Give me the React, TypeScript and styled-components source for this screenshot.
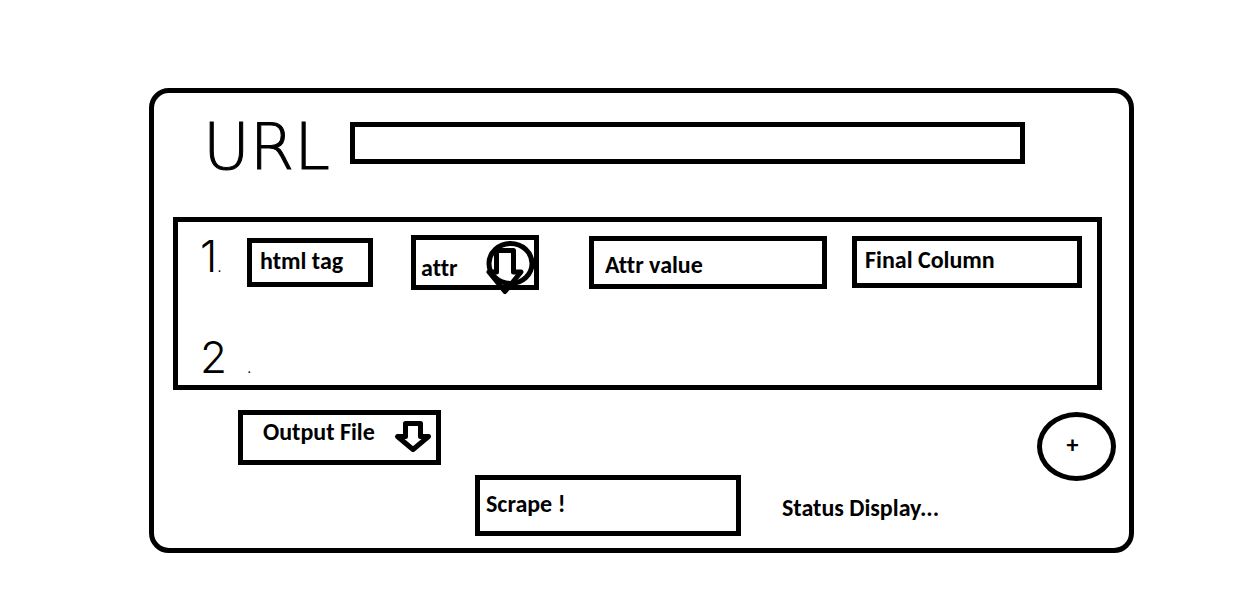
import React from "react";
import styled, { createGlobalStyle } from "styled-components";

const GlobalStyle = createGlobalStyle`
  *, *::before, *::after { box-sizing: border-box; }
  body {
    margin: 0;
    background: #fff;
    color: #000;
    font-family: Calibri, Carlito, Lato, sans-serif;
    font-size: 24px;
    font-weight: 700;
    font-variant-ligatures: none;
    line-height: 28px;
  }
  input, select, button {
    font: inherit;
    font-variant-ligatures: none;
    color: inherit;
  }
`;

const Page = styled.main`
  padding: 88px 108px 56px 149px;
`;

const Card = styled.form`
  border: 5px solid #000;
  border-radius: 20px;
  padding: 29px 27px 12px 19px;
`;

const UrlRow = styled.div`
  display: flex;
  align-items: center;
  height: 42px;
  margin: 0 77px 53px 30px;
`;

const UrlLabel = styled.label`
  flex: 0 0 147px;
  padding-top: 8px;
  font-family: "DejaVu Sans", sans-serif;
  font-size: 64px;
  font-weight: 200;
  line-height: 42px;
  -webkit-text-stroke: 1px #000;
`;

const Box = styled.input<{ $inset?: number; $top?: number; $bottom?: number }>`
  display: block;
  width: 100%;
  min-width: 0;
  height: 100%;
  border: 5px solid #000;
  border-radius: 0;
  background: #fff;
  padding: ${(p) => p.$top ?? 0}px 0 ${(p) => p.$bottom ?? 0}px ${(p) => p.$inset ?? 8}px;
  &::placeholder { color: #000; opacity: 1; }
`;

const Rules = styled.ol`
  list-style: none;
  margin: 0;
  padding: 12px 15px 0 22px;
  border: 5px solid #000;
`;

const Rule = styled.li`
  display: flex;
  align-items: center;
  min-height: 56px;
  & + & {
    min-height: 44px;
    margin-top: 51px;
  }
`;

const RuleNumber = styled.span<{ $gap: number }>`
  display: flex;
  flex: 0 0 47px;
  align-items: baseline;
  gap: ${(p) => p.$gap}px;
  height: 44px;
  font-family: Inter, sans-serif;
  font-size: 44px;
  font-weight: 300;
  line-height: 32px;
  small { font-size: 16px; }
`;

const Fields = styled.div`
  display: grid;
  flex: 1;
  grid-template-columns: 126fr 38px 128fr 50px 238fr 25px 230fr;
  align-items: center;
`;

const Field = styled.div<{ $column: number; $height: number }>`
  position: relative;
  grid-column: ${(p) => p.$column};
  height: ${(p) => p.$height}px;
`;

const Select = styled.select<{ $inset: number; $top?: number; $bottom?: number }>`
  appearance: none;
  display: block;
  width: 100%;
  height: 100%;
  border: 5px solid #000;
  border-radius: 0;
  background: #fff;
  padding: ${(p) => p.$top ?? 0}px 0 ${(p) => p.$bottom ?? 0}px ${(p) => p.$inset}px;
`;

const Arrow = styled.svg`
  position: absolute;
  top: 0;
  right: 0;
  overflow: visible;
  pointer-events: none;
  fill: none;
  stroke: #000;
  stroke-width: 5;
  stroke-linejoin: round;
`;

const Footer = styled.div`
  display: flex;
  align-items: flex-start;
  margin: 20px -14px 0 65px;
`;

const OutputField = styled.div`
  position: relative;
  flex: 0 1 203px;
  height: 55px;
`;

const ScrapeButton = styled.button`
  flex: 0 1 266px;
  height: 61px;
  margin: 65px 0 0 34px;
  border: 5px solid #000;
  background: #fff;
  padding: 0 6px 4px;
  text-align: left;
`;

const Status = styled.output`
  margin: 84px 0 0 41px;
  white-space: nowrap;
`;

const AddButton = styled.button`
  flex: 0 0 79px;
  height: 69px;
  margin: 2px 0 0 auto;
  border: 5px solid #000;
  border-radius: 50%;
  background: #fff;
  padding: 0 8px 4px 0;
`;

export default function App() {
  return (
    <>
      <GlobalStyle />
      <Page>
        <Card onSubmit={(e: React.FormEvent) => e.preventDefault()}>
          <UrlRow>
            <UrlLabel htmlFor="url">URL</UrlLabel>
            <Box id="url" type="text" />
          </UrlRow>

          <Rules>
            <Rule>
              <RuleNumber $gap={0}>
                1<small>.</small>
              </RuleNumber>
              <Fields>
                <Field $column={1} $height={49}>
                  <Box $bottom={4} aria-label="html tag" placeholder="html tag" />
                </Field>
                <Field $column={3} $height={55}>
                  <Select aria-label="attr" $inset={5} $top={12}>
                    <option>attr</option>
                  </Select>
                  <Arrow width="60" height="60" viewBox="0 0 60 60" aria-hidden="true">
                    <ellipse cx="31.5" cy="28.5" rx="21.5" ry="20" />
                    <path d="M17.5 15.5H34.5V37H42L26 56.5L10 37H17.5Z" />
                  </Arrow>
                </Field>
                <Field $column={5} $height={53}>
                  <Box $inset={11} $top={4} aria-label="Attr value" placeholder="Attr value" />
                </Field>
                <Field $column={7} $height={52}>
                  <Box $bottom={6} aria-label="Final Column" placeholder="Final Column" />
                </Field>
              </Fields>
            </Rule>
            <Rule>
              <RuleNumber $gap={20}>
                2<small>.</small>
              </RuleNumber>
            </Rule>
          </Rules>

          <Footer>
            <OutputField>
              <Select aria-label="Output File" $inset={20} $bottom={12}>
                <option>Output File</option>
              </Select>
              <Arrow width="50" height="50" viewBox="0 0 50 50" aria-hidden="true">
                <path d="M14.5 13.5H29.5V26.5H37.5L22 39.5L6.5 26.5H14.5Z" />
              </Arrow>
            </OutputField>
            <ScrapeButton type="submit">Scrape !</ScrapeButton>
            <Status>Status Display...</Status>
            <AddButton type="button" aria-label="Add row">+</AddButton>
          </Footer>
        </Card>
      </Page>
    </>
  );
}
